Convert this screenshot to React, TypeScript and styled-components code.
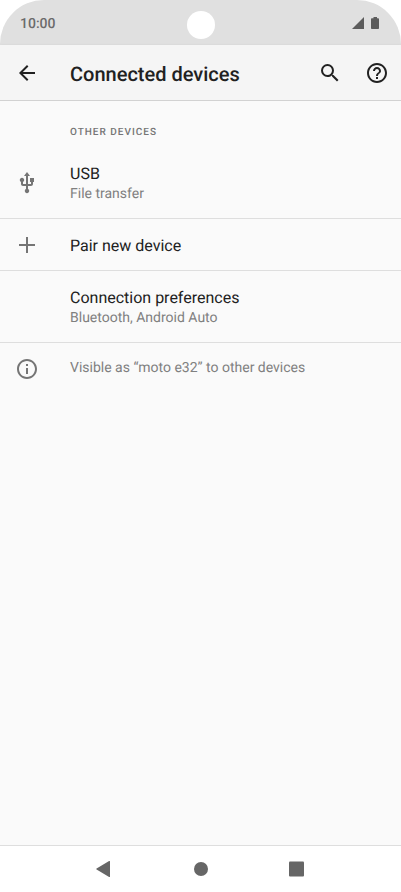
import React from "react";
import styled, { createGlobalStyle } from "styled-components";

const GlobalStyle = createGlobalStyle`
  * { box-sizing: border-box; }
  body {
    margin: 0;
    background: #ffffff;
    font-family: Roboto, "Noto Sans", sans-serif;
    color: #212121;
    text-rendering: geometricPrecision;
  }
  button { font: inherit; color: inherit; text-rendering: inherit; }
`;

const Screen = styled.div`
  display: flex;
  flex-direction: column;
  min-height: 100vh;
`;

const StatusBar = styled.div`
  display: grid;
  grid-template-columns: 1fr auto 1fr;
  align-items: center;
  height: 45px;
  padding: 2px 20px 0;
  background: #e0e0e0;
  border-radius: 44px 44px 0 0;
`;

const Clock = styled.time`
  font-size: 14px;
  font-weight: 500;
  line-height: 16px;
  color: #6b6b6b;
`;

const Camera = styled.span`
  width: 28px;
  height: 28px;
  margin-top: 2px;
  border-radius: 50%;
  background: #ffffff;
`;

const StatusIcons = styled.div`
  display: flex;
  justify-content: flex-end;
  align-items: center;
  color: #5c5c5c;

  svg { display: block; }
`;

const AppBar = styled.header`
  display: flex;
  align-items: center;
  height: 56px;
  padding: 0 12px 0 15px;
  background: #f5f5f5;
  border-bottom: 1px solid #d2d2d2;
  box-shadow: 0 1px 3px rgba(0, 0, 0, 0.12);
`;

const IconButton = styled.button`
  display: flex;
  padding: 0;
  border: 0;
  background: none;
  cursor: pointer;
`;

const Title = styled.h1`
  flex: 1;
  margin: 0 0 0 31px;
  padding-top: 2px;
  font-size: 20px;
  font-weight: 500;
  line-height: 24px;
`;

const Actions = styled.div`
  display: flex;
  gap: 23px;
`;

const Content = styled.main`
  flex: 1;
  padding-top: 24px;
  background: #fafafa;
`;

const SectionTitle = styled.h2`
  margin: 0 0 6px;
  padding-left: 70px;
  font-size: 10px;
  font-weight: 500;
  line-height: 16px;
  letter-spacing: 1px;
  text-transform: uppercase;
  color: #757575;
`;

const List = styled.ul`
  margin: 0;
  padding: 0;
  list-style: none;
`;

const Item = styled.li`
  & + & { border-top: 1px solid #dedede; }
`;

const Row = styled.button<{ $compact?: boolean }>`
  display: flex;
  align-items: center;
  width: 100%;
  min-height: ${(p) => (p.$compact ? 51 : 71)}px;
  padding: 0 15px;
  border: 0;
  background: none;
  text-align: left;
  cursor: pointer;
`;

const Note = styled.div`
  display: flex;
  align-items: center;
  min-height: 51px;
  padding: 0 15px;
`;

const Leading = styled.span`
  display: flex;
  flex: none;
  width: 55px;
  color: #757575;
`;

const RowText = styled.span`
  padding-top: 2px;
`;

const NoteText = styled.span`
  padding-bottom: 2px;
`;

const Label = styled.span`
  display: block;
  font-size: 16px;
  line-height: 20px;
`;

const Summary = styled.span`
  display: block;
  font-size: 14px;
  line-height: 20px;
  color: #808080;
`;

const NavBar = styled.nav`
  display: flex;
  justify-content: center;
  align-items: center;
  gap: 48px;
  height: 47px;
  border-top: 1px solid #dedede;
  background: #ffffff;
  color: #666666;
`;

const NavButton = styled(IconButton)`
  justify-content: center;
  width: 48px;
`;

const paths = {
  back: "M20 11H7.83l5.59-5.59L12 4l-8 8 8 8 1.41-1.41L7.83 13H20v-2z",
  search:
    "M15.5 14h-.79l-.28-.27A6.471 6.471 0 0 0 16 9.5 6.5 6.5 0 1 0 9.5 16c1.61 0 3.09-.59 4.23-1.57l.27.28v.79l5 4.99L20.49 19l-4.99-5zm-6 0C7.01 14 5 11.99 5 9.5S7.01 5 9.5 5 14 7.01 14 9.5 11.99 14 9.5 14z",
  help:
    "M11 18h2v-2h-2v2zm1-16C6.48 2 2 6.48 2 12s4.48 10 10 10 10-4.48 10-10S17.52 2 12 2zm0 18c-4.41 0-8-3.59-8-8s3.59-8 8-8 8 3.59 8 8-3.59 8-8 8zm0-14c-2.21 0-4 1.79-4 4h2c0-1.1.9-2 2-2s2 .9 2 2c0 2-3 1.75-3 5h2c0-2.25 3-2.5 3-5 0-2.21-1.79-4-4-4z",
  usb:
    "M15 7v4h1v2h-3V5h2l-3-4-3 4h2v8H8v-2.07c.7-.37 1.2-1.08 1.2-1.93 0-1.21-.99-2.2-2.2-2.2-1.21 0-2.2.99-2.2 2.2 0 .85.5 1.56 1.2 1.93V13c0 1.11.89 2 2 2h3v3.05c-.71.37-1.2 1.1-1.2 1.95 0 1.22.99 2.2 2.2 2.2 1.21 0 2.2-.98 2.2-2.2 0-.85-.49-1.58-1.2-1.95V15h3c1.11 0 2-.89 2-2v-2h1V7h-4z",
  plus: "M20 13h-7v7h-2v-7H4v-2h7V4h2v7h7v2z",
  info:
    "M11 7h2v2h-2zm0 4h2v6h-2zm1-9C6.48 2 2 6.48 2 12s4.48 10 10 10 10-4.48 10-10S17.52 2 12 2zm0 18c-4.41 0-8-3.59-8-8s3.59-8 8-8 8 3.59 8 8-3.59 8-8 8z",
  navBack: "M17 4.6v14.8a.6.6 0 0 1-.9.5L3.6 12.6a.7.7 0 0 1 0-1.2l12.5-7.3a.6.6 0 0 1 .9.5z",
  navHome: "M12 5a7 7 0 1 0 0 14 7 7 0 0 0 0-14z",
  navRecents: "M5 4.5h13a1 1 0 0 1 1 1v13a1 1 0 0 1-1 1H5a1 1 0 0 1-1-1v-13a1 1 0 0 1 1-1z",
};

const Icon = ({ name }: { name: keyof typeof paths }) => (
  <svg width="24" height="24" viewBox="0 0 24 24" fill="currentColor" aria-hidden="true">
    <path d={paths[name]} />
  </svg>
);

export default function App() {
  return (
    <Screen>
      <GlobalStyle />
      <StatusBar>
        <Clock>10:00</Clock>
        <Camera />
        <StatusIcons>
          <svg width="30" height="16" viewBox="0 0 30 16" fill="currentColor" aria-hidden="true">
            <path d="M13 1v12H1z" />
            <path d="M22.5 1h3.5v1.2h1.2c.5 0 .8.3.8.8v9.2c0 .5-.3.8-.8.8h-6.4c-.5 0-.8-.3-.8-.8V3c0-.5.3-.8.8-.8h1.7z" />
          </svg>
        </StatusIcons>
      </StatusBar>
      <AppBar>
        <IconButton aria-label="Back">
          <Icon name="back" />
        </IconButton>
        <Title>Connected devices</Title>
        <Actions>
          <IconButton aria-label="Search">
            <Icon name="search" />
          </IconButton>
          <IconButton aria-label="Help">
            <Icon name="help" />
          </IconButton>
        </Actions>
      </AppBar>
      <Content>
        <SectionTitle>Other devices</SectionTitle>
        <List>
          <Item>
            <Row>
              <Leading>
                <Icon name="usb" />
              </Leading>
              <RowText>
                <Label>USB</Label>
                <Summary>File transfer</Summary>
              </RowText>
            </Row>
          </Item>
          <Item>
            <Row $compact>
              <Leading>
                <Icon name="plus" />
              </Leading>
              <RowText>
                <Label>Pair new device</Label>
              </RowText>
            </Row>
          </Item>
          <Item>
            <Row>
              <Leading />
              <RowText>
                <Label>Connection preferences</Label>
                <Summary>Bluetooth, Android Auto</Summary>
              </RowText>
            </Row>
          </Item>
          <Item>
            <Note>
              <Leading>
                <Icon name="info" />
              </Leading>
              <NoteText>
                <Summary>Visible as “moto e32” to other devices</Summary>
              </NoteText>
            </Note>
          </Item>
        </List>
      </Content>
      <NavBar aria-label="System navigation">
        <NavButton aria-label="Back">
          <Icon name="navBack" />
        </NavButton>
        <NavButton aria-label="Home">
          <Icon name="navHome" />
        </NavButton>
        <NavButton aria-label="Recent apps">
          <Icon name="navRecents" />
        </NavButton>
      </NavBar>
    </Screen>
  );
}
